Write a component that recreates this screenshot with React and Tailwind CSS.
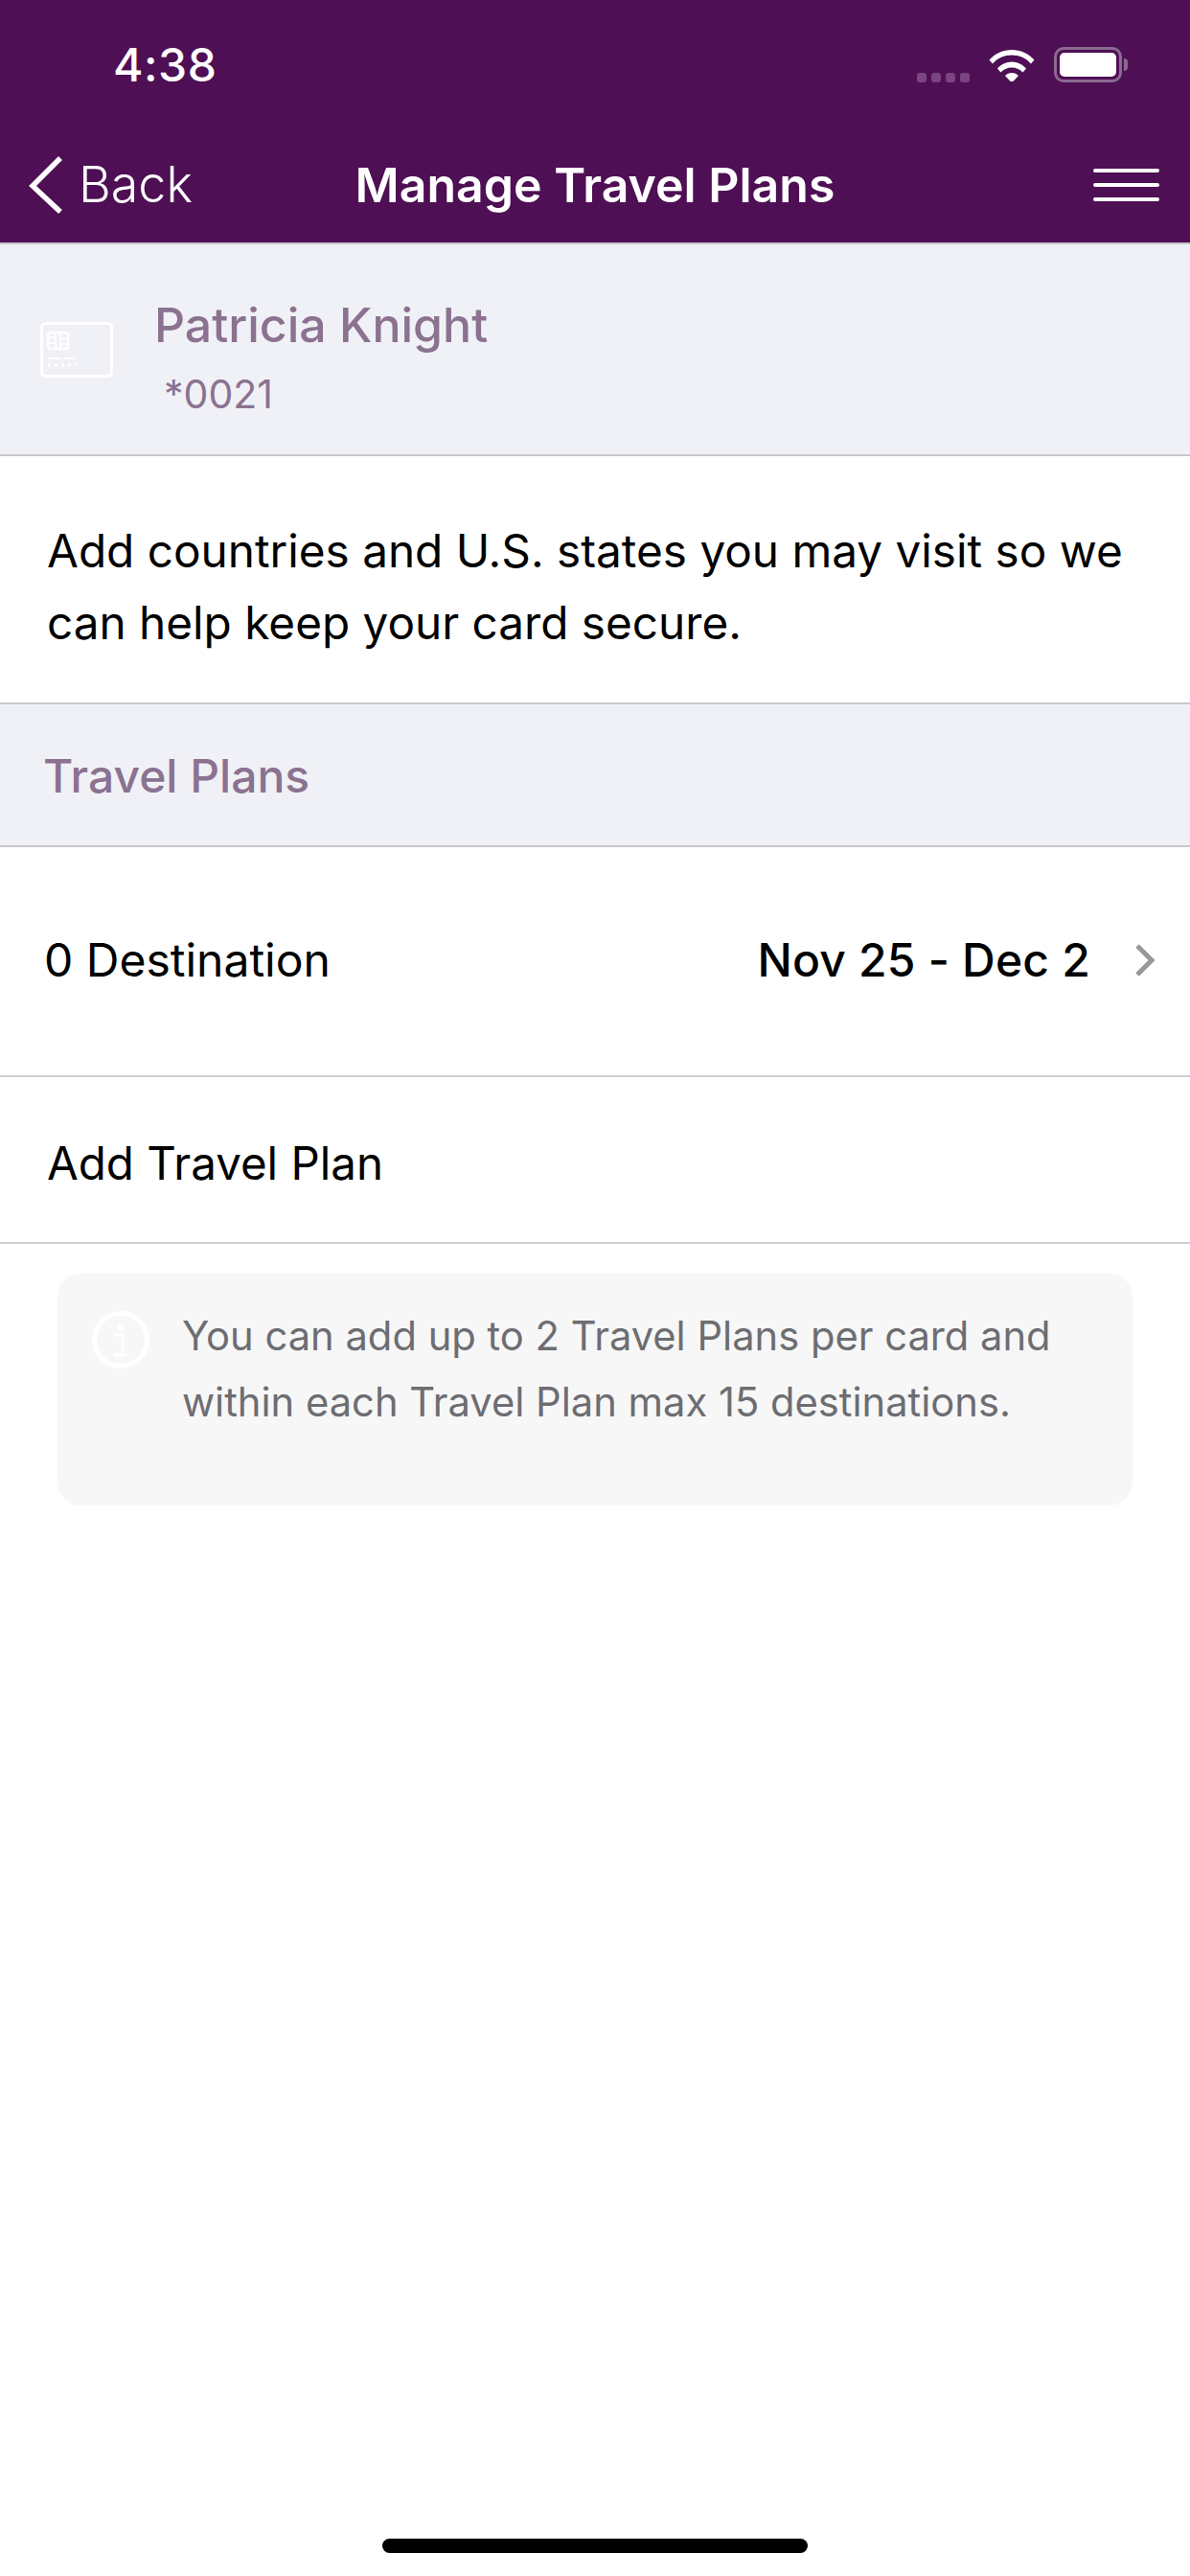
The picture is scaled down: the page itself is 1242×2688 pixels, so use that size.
import React from "react";

const font = "font-['Inter','Liberation_Sans',sans-serif]";

const StatusBar = () => (
  <div className="flex h-[108px] items-start justify-between pl-[118px] pr-[65px] pt-[40px]">
    <span className="text-[48px] font-medium leading-[56px] tracking-[0.5px] text-white">4:38</span>
    <div className="flex items-start pt-[9px]">
      <div className="mt-[27px] flex gap-[5px]">
        {[0, 1, 2, 3].map((i) => (
          <span key={i} className="h-[10px] w-[10px] rounded-[3px] bg-[#7a4580]" />
        ))}
      </div>
      <svg className="ml-[20px]" width="48" height="36" viewBox="0 0 48 36">
        <path d="M0.5 13.5C6.5 7 15 3 24 3s17.5 4 23.5 10.500l-3.500 4C39 11.500 31.500 8.500 24 8.500S9 11.500 4 17.500z" fill="#fff" />
        <path d="M9 22.500C12.500 18.500 18 15.500 24 15.500s11.500 3 15 7l-3.500 4C33 23.500 28.500 21.500 24 21.500s-9 2-11.500 5z" fill="#fff" />
        <path d="M17 30c1.800-2 4.300-3 7-3s5.200 1 7 3l-7 7.500z" fill="#fff" />
      </svg>
      <div className="ml-[20px] flex items-center">
        <div className="h-[37px] w-[71px] rounded-[10px] border-[3px] border-[#8b6a90] p-[3px]">
          <div className="h-full w-full rounded-[5px] bg-white" />
        </div>
        <div className="ml-[2px] h-[13px] w-[4px] rounded-r-full bg-[#8b6a90]" />
      </div>
    </div>
  </div>
);

const NavBar = () => (
  <div className="flex h-[145px] items-center pl-[30px] pr-[32px] pt-[24px]">
    <div className="flex flex-1 items-center">
      <svg width="36" height="60" viewBox="0 0 36 60" fill="none" stroke="#fff" strokeWidth="5.500">
        <path d="M33 2 4 31l29 27" />
      </svg>
      <span className="ml-[16px] text-[52px] font-[350] leading-[60px] text-white">Back</span>
    </div>
    <span className="ml-[2px] text-[50px] font-semibold leading-[60px] text-white">Manage Travel Plans</span>
    <div className="flex flex-1 justify-end">
      <div className="flex w-[69px] flex-col gap-[11px]">
        <span className="h-[4px] rounded-full bg-white" />
        <span className="h-[4px] rounded-full bg-white" />
        <span className="h-[4px] rounded-full bg-white" />
      </div>
    </div>
  </div>
);

const CardIcon = () => (
  <svg width="76" height="58" viewBox="0 0 76 58" fill="none" stroke="#fff" strokeWidth="3">
    <rect x="1.500" y="1.500" width="73" height="55" rx="4" />
    <rect x="8" y="11" width="21" height="17" rx="3" strokeWidth="2.500" />
    <path d="M16 11v17M21 11v17M8 16h8M8 22h8M21 18h8M21 23h8" strokeWidth="2" />
    <path d="M8 38h13M24 38h13" strokeWidth="2" />
    <path d="M8 45h30" strokeWidth="3" strokeDasharray="3 4" />
  </svg>
);

const InfoIcon = () => (
  <svg className="shrink-0" width="60" height="60" viewBox="0 0 60 60" fill="none" stroke="#fff">
    <circle cx="30" cy="30" r="27.500" strokeWidth="5" />
    <circle cx="30" cy="17" r="3.500" fill="#fff" stroke="none" />
    <path d="M24 25h8v20M23 46h14" strokeWidth="3" />
  </svg>
);

const App = () => {
  return (
    <div className={`flex h-[2688px] w-[1242px] flex-col overflow-hidden bg-white ${font}`}>
      <div className="h-[253px] bg-[#4e0f54]">
        <StatusBar />
        <NavBar />
      </div>

      <div className="flex h-[223px] items-center border-y-2 border-y-[#c8c7cc] bg-[#f0f1f6] pl-[42px]">
        <CardIcon />
        <div className="ml-[43px] flex flex-col pt-[11px]">
          <span className="text-[50px] font-medium leading-[70px] text-[#8b7290]">Patricia Knight</span>
          <span className="ml-[10px] mt-[12px] text-[41px] leading-[50px] text-[#8b7290]">*0021</span>
        </div>
      </div>

      <div className="flex h-[257px] items-center px-[49px] pt-[17px]">
        <p className="text-[47.700px] leading-[75px] text-black">
          Add countries and U.S. states you may visit so we can help keep your card secure.
        </p>
      </div>

      <div className="flex h-[151px] items-center border-y-2 border-[#c8c7cc] bg-[#f0f1f6] pl-[45px] pt-[2px]">
        <span className="text-[48px] font-medium text-[#8b7290]">Travel Plans</span>
      </div>

      <div className="flex h-[240px] items-center justify-between border-b-2 border-[#d0d0d3] pb-[2px] pl-[46px] pr-[36px]">
        <span className="text-[48px] text-black">0 Destination</span>
        <div className="flex items-center">
          <span className="text-[48px] font-medium tracking-[0.2px] text-black">Nov 25 - Dec 2</span>
          <svg className="ml-[46px]" width="22" height="34" viewBox="0 0 22 34" fill="none" stroke="#98989c" strokeWidth="5">
            <path d="m3 2 15 15L3 32" />
          </svg>
        </div>
      </div>

      <div className="flex h-[174px] items-center border-b-2 border-[#d0d0d3] pl-[49px] pt-[8px]">
        <span className="text-[47.500px] text-black">Add Travel Plan</span>
      </div>

      <div className="ml-[60px] mt-[31px] flex h-[242px] w-[1122px] rounded-[24px] bg-[#f7f7f7] pl-[36px] pt-[39px]">
        <InfoIcon />
        <p className="ml-[34px] -mt-[8px] text-[41.700px] leading-[69px] text-[#6d6d72]">
          You can add up to 2 Travel Plans per card and
          <br />
          within each Travel Plan max 15 destinations.
        </p>
      </div>

      <div className="mt-auto mb-[24px] h-[15px] w-[444px] self-center rounded-full bg-black" />
    </div>
  );
};

export default App;
